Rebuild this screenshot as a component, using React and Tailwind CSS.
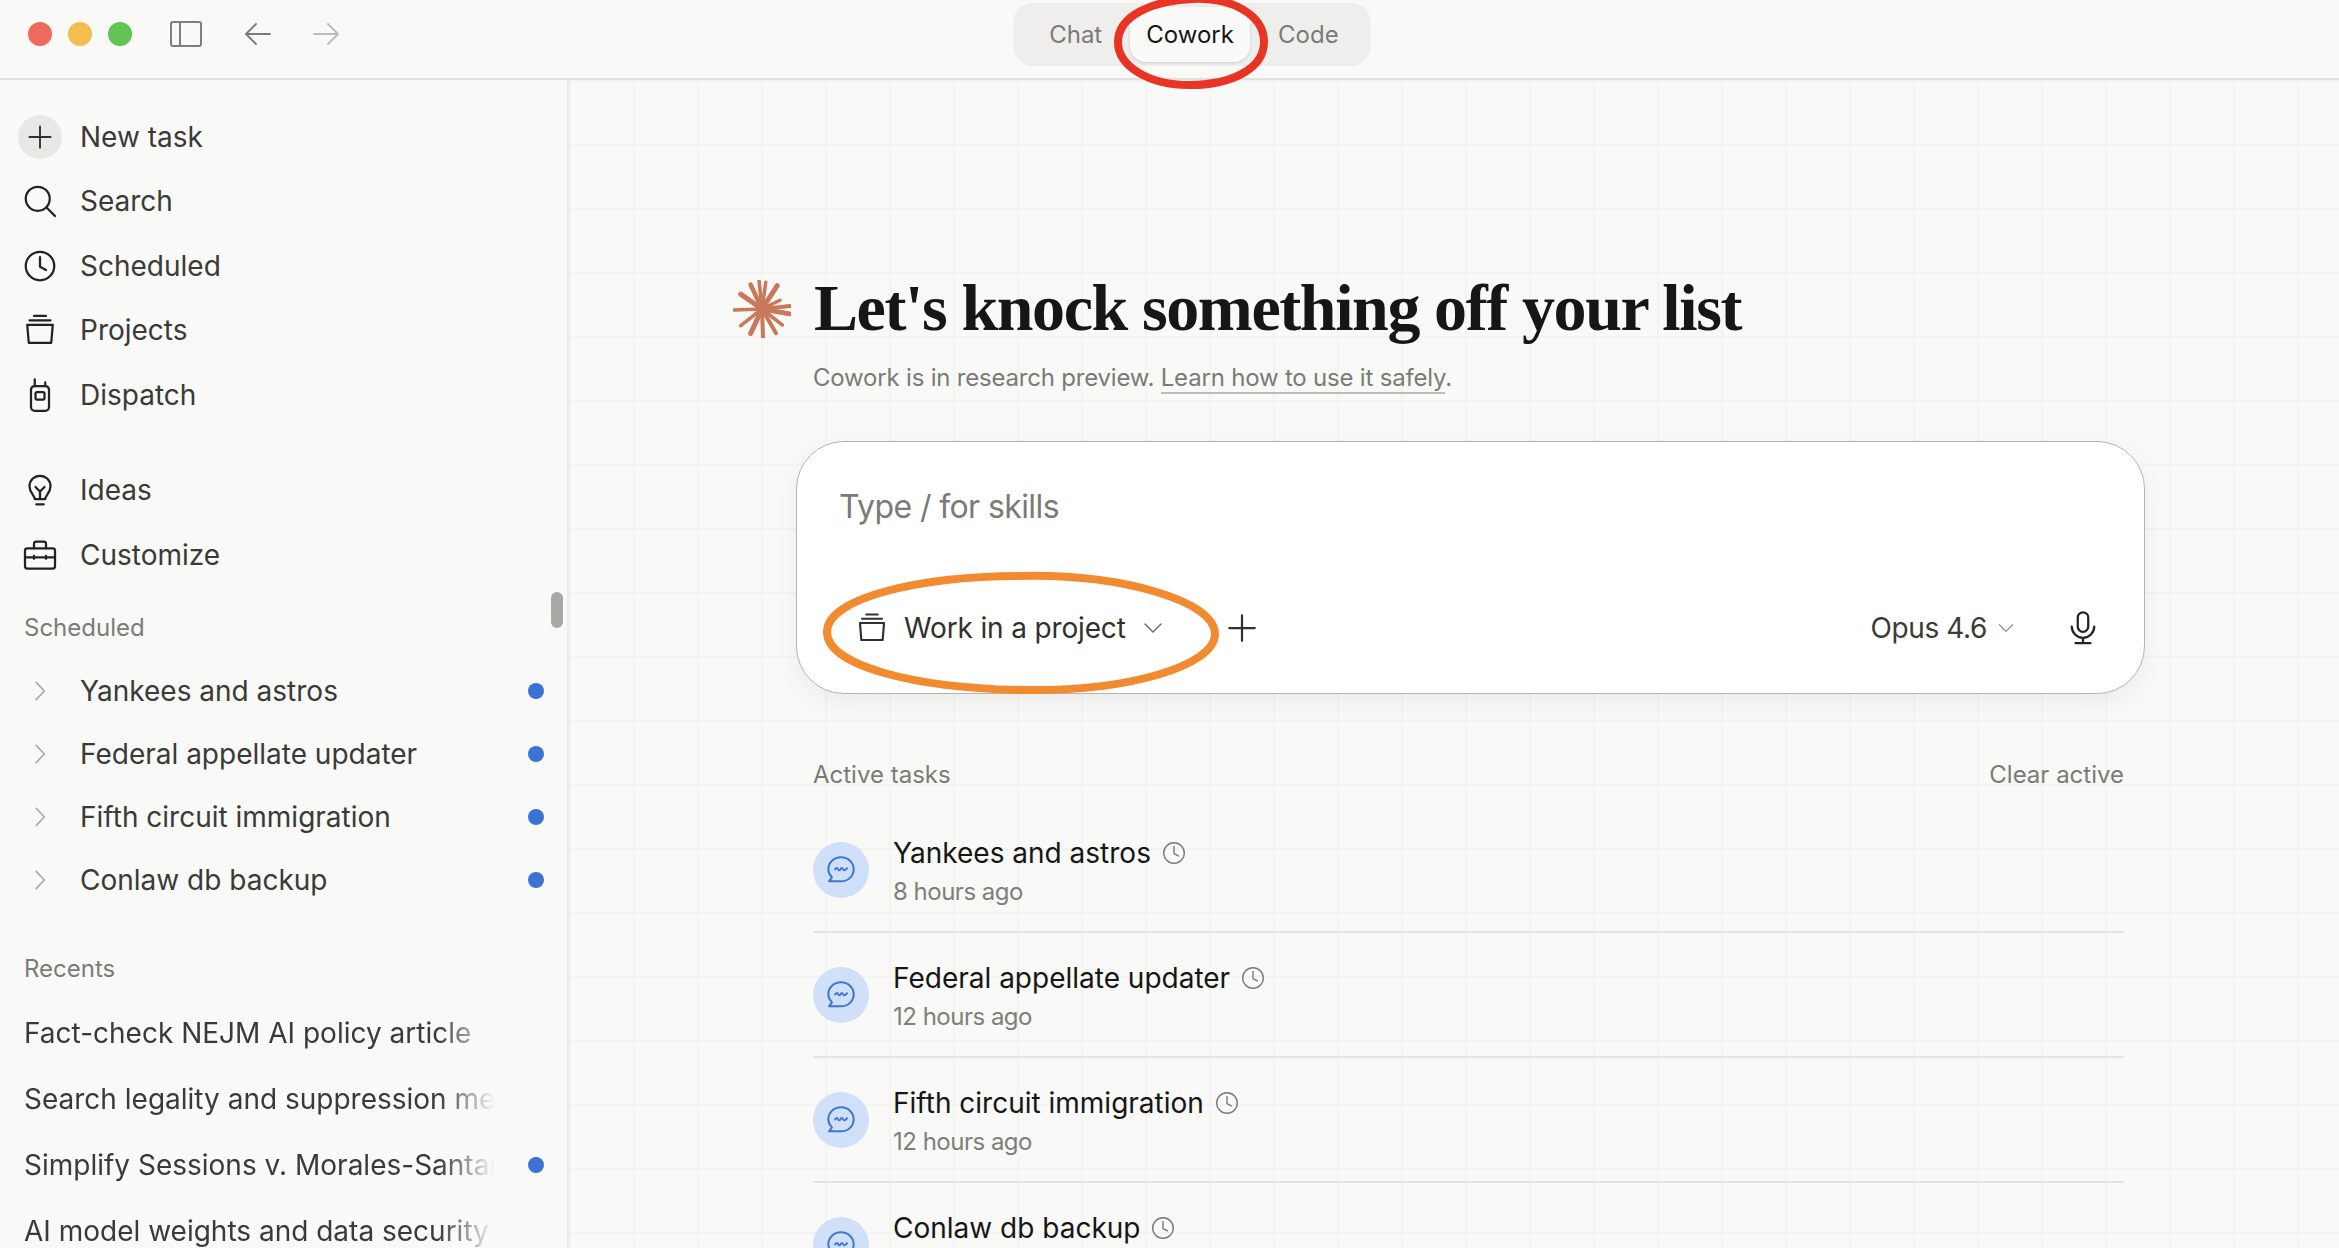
const sans = "font-['Inter','Noto_Sans',sans-serif]";

const Icon = ({ size = 32, children, className = "", strokeWidth = 1.5 }) => (
  <svg
    width={size}
    height={size}
    viewBox="0 0 24 24"
    fill="none"
    stroke="currentColor"
    strokeWidth={strokeWidth}
    strokeLinecap="round"
    strokeLinejoin="round"
    className={className}
  >
    {children}
  </svg>
);

const PlusIcon = (props) => (
  <Icon {...props}>
    <path d="M12 3.500v17M3.500 12h17" />
  </Icon>
);
const SearchIcon = (props) => (
  <Icon {...props}>
    <circle cx="10.500" cy="10.500" r="8" />
    <path d="M16.500 16.500l5.500 5.500" />
  </Icon>
);
const ClockIcon = (props) => (
  <Icon {...props}>
    <circle cx="12" cy="12" r="9.500" />
    <path d="M12 6v6.500l4 2.200" />
  </Icon>
);
const ProjectIcon = (props) => (
  <Icon {...props}>
    <path d="M8 2.500h8M5 5.500h14M3.500 8.500h17l-1 12h-15z" />
  </Icon>
);
const DispatchIcon = (props) => (
  <Icon {...props}>
    <path d="M8.500 6V1.500M15.500 6V3.500" />
    <rect x="6" y="6" width="12" height="16.500" rx="2.500" />
    <rect x="9" y="10" width="6" height="5" rx="1" />
  </Icon>
);
const BulbIcon = (props) => (
  <Icon {...props}>
    <path d="M8.500 18c0-2.500-3.500-4-3.500-8.500a7 7 0 0 1 14 0c0 4.500-3.500 6-3.500 8.500z" />
    <path d="M9.500 21.500h5M9 10l3 3 3-3M12 13v5" />
  </Icon>
);
const ToolboxIcon = (props) => (
  <Icon {...props}>
    <rect x="2" y="7.500" width="20" height="13.500" rx="1.500" />
    <path d="M8 7.500V4.500A1.500 1.500 0 0 1 9.500 3h5A1.500 1.500 0 0 1 16 4.500v3M2 13.500h20M8 12.500v2M16 12.500v2" />
  </Icon>
);
const ChevronRight = (props) => (
  <Icon {...props}>
    <path d="M8.500 4l7.500 8-7.500 8" />
  </Icon>
);
const ChevronDown = (props) => (
  <Icon {...props}>
    <path d="M4 8l8 8 8-8" />
  </Icon>
);
const MicIcon = (props) => (
  <Icon {...props}>
    <rect x="8.500" y="1.500" width="7" height="13" rx="3.500" />
    <path d="M4.500 11a7.500 7.500 0 0 0 15 0M12 18.500v3.500M7 22h10" />
  </Icon>
);
const ChatBubble = () => (
  <svg width="32" height="32" viewBox="0 0 24 24" fill="none" stroke="#3f76d6" strokeWidth="1.5" strokeLinecap="round" strokeLinejoin="round">
    <path d="M12 2.500c5.300 0 9.500 3.900 9.500 9s-4.200 9-9.500 9H3l2.200-3C3.500 15.800 2.500 13.800 2.500 11.500c0-5.100 4.200-9 9.500-9z" />
    <path d="M7.500 11.500c1-1.300 1.800-1.300 2.300 0 .5 1 1.300 1 1.800 0 .6-1.300 1.400-1.300 2 0 .5 1 1.300 1 2.900-.8" />
  </svg>
);

const StarLogo = () => {
  const rays = [
    [-6, 28, 3.500], [8, 27, 3.500], [33, 28, 5], [64, 20, 3.500], [84, 28, 4], [100, 28, 5],
    [128, 26, 3.500], [150, 28, 4], [178, 29, 4], [205, 27, 5], [232, 27, 3.500], [268, 28, 3.500], [305, 26, 5], [335, 27, 4.500],
  ];
  return (
    <svg width="58" height="58" viewBox="-29 -29 58 58" stroke="#c9785a" strokeLinecap="round">
      {rays.map(([angle, len, width]) => (
        <line
          key={angle}
          x1="0"
          y1="0"
          x2={Math.sin((angle * Math.PI) / 180) * len}
          y2={-Math.cos((angle * Math.PI) / 180) * len}
          strokeWidth={width}
        />
      ))}
    </svg>
  );
};

const navTop = [
  { label: "Search", icon: SearchIcon },
  { label: "Scheduled", icon: ClockIcon },
  { label: "Projects", icon: ProjectIcon },
  { label: "Dispatch", icon: DispatchIcon },
];
const navBottom = [
  { label: "Ideas", icon: BulbIcon },
  { label: "Customize", icon: ToolboxIcon },
];
const scheduled = ["Yankees and astros", "Federal appellate updater", "Fifth circuit immigration", "Conlaw db backup"];
const recents = [
  { title: "Fact-check NEJM AI policy article" },
  { title: "Search legality and suppression memo" },
  { title: "Simplify Sessions v. Morales-Santana", dot: true },
  { title: "AI model weights and data security" },
];
const tasks = [
  { title: "Yankees and astros", time: "8 hours ago" },
  { title: "Federal appellate updater", time: "12 hours ago" },
  { title: "Fifth circuit immigration", time: "12 hours ago" },
  { title: "Conlaw db backup", time: "12 hours ago" },
];

const NavRow = ({ label, icon: Glyph }) => (
  <div className="flex h-[64.5px] items-center">
    <div className="flex w-[80px] justify-center">
      <Glyph size={36} className="text-[#222220]" />
    </div>
    <span className="text-[28px] text-[#3a3a37]">{label}</span>
  </div>
);

const Dot = () => <span className="h-4 w-4 rounded-full bg-[#3b73d4]" />;

const Sidebar = () => (
  <aside className="relative h-full w-[569px] shrink-0 border-r-2 border-[#ebebe7] pt-6">
    <div className="flex h-[65px] items-center">
      <div className="flex w-[80px] justify-center">
        <div className="flex h-[44px] w-[44px] items-center justify-center rounded-full bg-[#e8e8e4]">
          <PlusIcon size={30} className="text-[#30302e]" />
        </div>
      </div>
      <span className="text-[28px] text-[#3a3a37]">New task</span>
    </div>
    {navTop.map((item) => (
      <NavRow key={item.label} {...item} />
    ))}
    <div className="mt-[31px]">
      {navBottom.map((item) => (
        <NavRow key={item.label} {...item} />
      ))}
    </div>
    <p className="mt-[24px] flex h-[34px] items-center pl-6 text-[24px] text-[#7c7c77]">Scheduled</p>
    <div className="mt-[14px]">
      {scheduled.map((name) => (
        <div key={name} className="flex h-[63px] items-center pr-[23px]">
          <div className="flex w-[80px] justify-center">
            <ChevronRight size={26} className="text-[#a9a9a5]" />
          </div>
          <span className="flex-1 text-[28px] text-[#3a3a37]">{name}</span>
          <Dot />
        </div>
      ))}
    </div>
    <p className="mt-[41px] flex h-[34px] items-center pl-6 text-[24px] text-[#7c7c77]">Recents</p>
    <div className="mt-[14px]">
      {recents.map((item) => (
        <div key={item.title} className="flex h-[66px] items-center pl-6 pr-[23px]">
          <span className="w-[471px] overflow-hidden whitespace-nowrap text-[28px] text-[#3a3a37] [mask-image:linear-gradient(to_right,black_88%,transparent_100%)]">
            {item.title}
          </span>
          <span className="flex-1" />
          {item.dot && <Dot />}
        </div>
      ))}
    </div>
    <div className="absolute right-[4px] top-[512px] h-[36px] w-3 rounded-full bg-[#a8a8a5]" />
  </aside>
);

const TopBar = () => (
  <header className="relative flex h-[80px] shrink-0 border-b-2 border-[#e0e0dc]">
    <div className="flex h-[68px] w-[1013px] items-center">
      <div className="ml-[28px] flex gap-4">
        <span className="h-6 w-6 rounded-full bg-[#ee6a5f]" />
        <span className="h-6 w-6 rounded-full bg-[#f5bd4f]" />
        <span className="h-6 w-6 rounded-full bg-[#61c454]" />
      </div>
      <div className="ml-[38px] flex h-[26px] w-[32px] rounded-[3px] border-2 border-[#7f7f7b]">
        <span className="ml-[7px] h-full w-[2px] bg-[#7f7f7b]" />
      </div>
      <Icon size={32} strokeWidth={1.4} className="ml-[40px] text-[#7b7b77]">
        <path d="M21 12H3.500M10.500 4.500L3 12l7.500 7.500" />
      </Icon>
      <Icon size={32} strokeWidth={1.4} className="ml-[36px] text-[#bcbcb8]">
        <path d="M3 12h17.500M13.500 4.500L21 12l-7.500 7.500" />
      </Icon>
    </div>
    <div className="mt-[3px] flex h-[63px] w-[358px] rounded-[20px] bg-[#efeeec] p-[4px] pl-[8px] text-[24px]">
      <div className="flex w-[110px] items-center justify-center text-[#7b7b76]">Chat</div>
      <div className="flex w-[120px] items-center justify-center rounded-[16px] bg-[#fafaf9] text-[#161615] shadow-[0_1px_3px_rgba(0,0,0,0.15)]">
        Cowork
      </div>
      <div className="flex w-[118px] items-center justify-center text-[#7b7b76]">Code</div>
    </div>
    <svg className="absolute left-[1114px] top-[-4px] overflow-visible" width="154" height="92" viewBox="0 0 154 92" fill="none">
      <path d="M78 3C118 1 150 19 150 46c0 27-33 43-75 43C36 89 4 71 4 46 4 20 38 4 82 3" stroke="#e93323" strokeWidth="8" strokeLinecap="round" />
    </svg>
  </header>
);

const Composer = () => (
  <div className="relative -ml-[17px] -mr-[21px] mt-[46px] flex h-[253px] flex-col rounded-[48px] border border-[#b4b4b0] bg-white px-[42px] shadow-[0_8px_24px_rgba(0,0,0,0.06)]">
    <p className="mt-[45px] h-[40px] text-[32px] leading-[40px] tracking-[-0.6px] text-[#7b7b76]">Type / for skills</p>
    <div className="mt-[81px] flex h-[40px] items-center">
      <ProjectIcon size={34} className="ml-[16px] text-[#30302e]" />
      <span className="ml-[15px] text-[28px] tracking-[-0.15px] text-[#30302e]">Work in a project</span>
      <ChevronDown size={24} className="ml-[15px] text-[#6e6e6a]" />
      <PlusIcon size={36} className="ml-[59px] text-[#30302e]" />
      <span className="ml-auto text-[28px] tracking-[-0.4px] text-[#3a3a37]">Opus 4.6</span>
      <ChevronDown size={20} className="ml-[9px] text-[#8a8a86]" />
      <MicIcon size={36} className="ml-[49px] mr-[1px] text-[#222220]" />
    </div>
    <svg className="absolute left-[26px] top-[130px] overflow-visible" width="396" height="122" viewBox="0 0 396 122" fill="none">
      <path d="M198 4C296 2 392 28 392 62c0 32-88 58-194 56C92 116 4 94 4 60 4 26 96 4 200 4" stroke="#f28a30" strokeWidth="8" strokeLinecap="round" />
    </svg>
  </div>
);

const TaskRow = ({ title, time }) => (
  <div className="flex h-[125px] shrink-0 items-center border-b-2 border-[#e4e4e0]">
    <div className="flex h-14 w-14 items-center justify-center rounded-full bg-[#d0e0f9]">
      <ChatBubble />
    </div>
    <div className="ml-[24px] pt-[4px]">
      <div className="flex h-[40px] items-center">
        <span className="text-[28px] text-[#161615]">{title}</span>
        <ClockIcon size={26} strokeWidth={1.3} className="ml-[10px] text-[#7b7b76]" />
      </div>
      <p className="h-[38px] text-[24px] leading-[38px] tracking-[-0.5px] text-[#7f7f7a]">{time}</p>
    </div>
  </div>
);

const Main = () => (
  <main className="min-w-0 flex-1 overflow-hidden bg-[linear-gradient(#f3f3f1_2px,transparent_2px),linear-gradient(90deg,#f3f3f1_2px,transparent_2px)] bg-[size:64px_64px] pl-[244px] pr-[215px] pt-[193px]">
    <div className="-ml-[80px] flex h-[72px] items-center gap-[23px]">
      <StarLogo />
      <h1 className="-mt-[3px] font-['Liberation_Serif',serif] text-[66px] font-bold tracking-[-1.4px] text-[#161615]">
        Let's knock something off your list
      </h1>
    </div>
    <p className="mt-4 h-[34px] text-[24px] leading-[34px] tracking-[-0.2px] text-[#7b7b76]">
      Cowork is in research preview.{" "}
      <span className="border-b-2 border-[#bcbcb8]">Learn how to use it safely</span>.
    </p>
    <Composer />
    <div className="mt-[64px] flex h-[34px] items-center justify-between text-[24px] text-[#7b7b76]">
      <span>Active tasks</span>
      <span>Clear active</span>
    </div>
    <div className="mt-[16px]">
      {tasks.map((task) => (
        <TaskRow key={task.title} {...task} />
      ))}
    </div>
  </main>
);

export default function App() {
  return (
    <div className={`flex h-[1248px] w-[2339px] flex-col overflow-hidden bg-[#f9f9f7] ${sans}`}>
      <TopBar />
      <div className="flex min-h-0 flex-1">
        <Sidebar />
        <Main />
      </div>
    </div>
  );
}
